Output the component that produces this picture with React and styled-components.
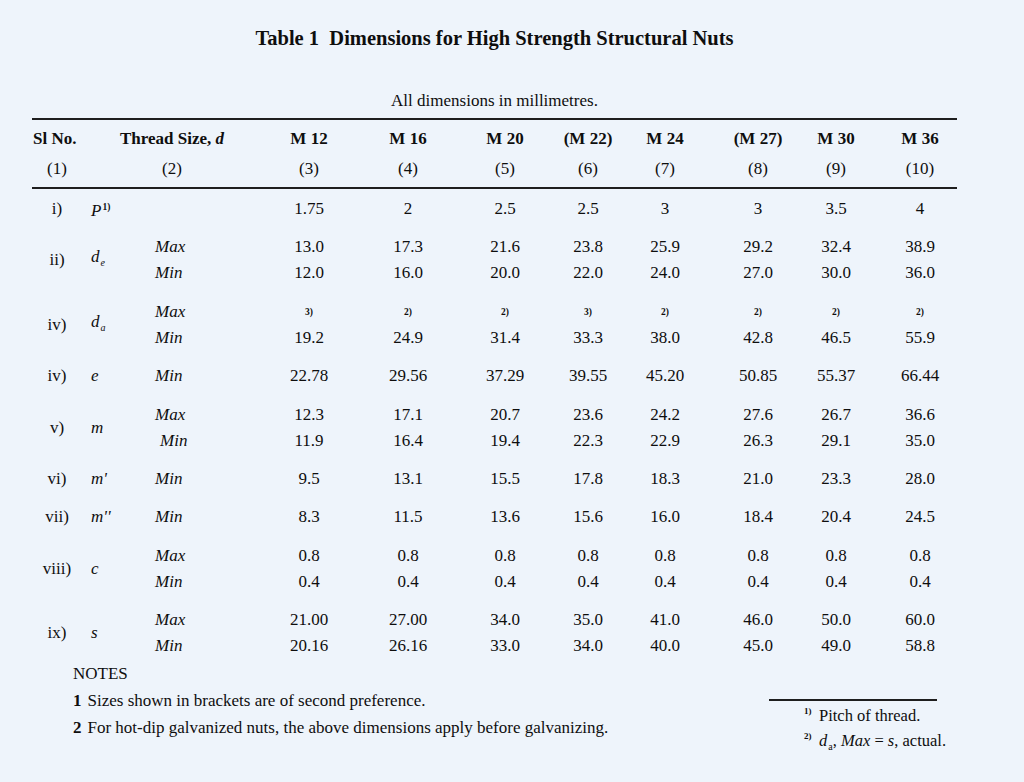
import React from "react";
import styled, { createGlobalStyle } from "styled-components";

const GlobalStyle = createGlobalStyle`
  html, body { margin: 0; padding: 0; background: #eef4fb; }
  body {
    font-family: "Liberation Serif", "Times New Roman", serif;
    color: #0e0e0e;
  }
`;

const COLS = "50px 63px 117px 94px 104px 90px 76px 78px 108px 48px 120px";

const Page = styled.div`
  width: 1024px;
  height: 782px;
  box-sizing: border-box;
  padding: 26px 0 0 32px;
  background: #eef4fb;
  overflow: hidden;
`;

const Title = styled.h1`
  margin: 0;
  width: 925px;
  text-align: center;
  font-size: 20.5px;
  line-height: 24px;
  font-weight: 700;
  white-space: pre;
`;

const Subtitle = styled.p`
  margin: 41px 0 0;
  width: 925px;
  text-align: center;
  font-size: 17px;
  line-height: 20px;
`;

const Rule = styled.div`
  width: ${(p) => p.$width || 925}px;
  height: ${(p) => p.$thick}px;
  background: #1e1e1e;
`;

const Table = styled.div`
  margin-top: 7px;
`;

const Grid = styled.div`
  display: grid;
  grid-template-columns: ${COLS};
  grid-auto-rows: 26px;
  width: 948px;
  font-size: 17px;
  line-height: 26px;
`;

const HeadGrid = styled(Grid)`
  row-gap: 4px;
  padding: 6px 0 5px;
`;

const HeadCell = styled.div`
  font-weight: ${(p) => (p.$bold ? 700 : 400)};
  text-align: ${(p) => p.$align || "center"};
  grid-column: ${(p) => p.$span || "auto"};
  padding-left: ${(p) => p.$pl || 0}px;
  white-space: nowrap;
`;

const Body = styled.div`
  padding-top: 1.5px;
`;

const Group = styled(Grid)`
  padding: 6px 0 6.4px;
`;

const RowLabel = styled.div`
  grid-column: 1;
  grid-row: 1 / span ${(p) => p.$rows};
  align-self: center;
  text-align: center;
`;

const Symbol = styled.div`
  grid-column: 2;
  grid-row: 1 / span ${(p) => p.$rows};
  align-self: center;
  padding-left: 9px;
  font-style: italic;
  white-space: nowrap;
`;

const Limit = styled.div`
  padding-left: ${(p) => 10 + (p.$indent || 0)}px;
  font-style: italic;
`;

const Value = styled.div`
  text-align: center;
  white-space: nowrap;
`;

const Sup = styled.span`
  font-size: 9.5px;
  font-style: normal;
  font-weight: 700;
  vertical-align: ${(p) => p.$raise || 6}px;
  margin-left: ${(p) => p.$ml || 0}px;
`;

const Sub = styled.span`
  font-size: 10px;
  vertical-align: -4px;
  margin-left: 1px;
`;

const Bottom = styled.div`
  display: flex;
  align-items: flex-start;
  justify-content: space-between;
  width: 905px;
  margin-top: -6px;
`;

const Notes = styled.div`
  padding-left: 41px;
  font-size: 17px;
  line-height: 27px;
`;

const NoteLine = styled.div`
  white-space: nowrap;
`;

const NoteNum = styled.b`
  margin-right: 6px;
`;

const Footnotes = styled.div`
  margin-top: 39.5px;
  width: 168px;
`;

const FootList = styled.div`
  padding: 2px 0 0 50px;
  font-size: 16.5px;
  line-height: 25px;
`;

const FootLine = styled.div`
  position: relative;
  white-space: nowrap;
`;

const FootMark = styled.span`
  position: absolute;
  left: -15px;
  top: -4px;
  font-size: 9px;
  font-weight: 700;
`;

const I = styled.i``;

const HEAD = ["M 12", "M 16", "M 20", "(M 22)", "M 24", "(M 27)", "M 30", "M 36"];

const ROWS = [
  { n: "i)", sym: <>P<Sup $ml={1}>1)</Sup></>, lines: [{ lim: "", v: ["1.75", "2", "2.5", "2.5", "3", "3", "3.5", "4"] }] },
  {
    n: "ii)",
    sym: <>d<Sub>e</Sub></>,
    lines: [
      { lim: "Max", v: ["13.0", "17.3", "21.6", "23.8", "25.9", "29.2", "32.4", "38.9"] },
      { lim: "Min", v: ["12.0", "16.0", "20.0", "22.0", "24.0", "27.0", "30.0", "36.0"] },
    ],
  },
  {
    n: "iv)",
    sym: <>d<Sub>a</Sub></>,
    lines: [
      { lim: "Max", sup: true, v: ["3)", "2)", "2)", "3)", "2)", "2)", "2)", "2)"] },
      { lim: "Min", v: ["19.2", "24.9", "31.4", "33.3", "38.0", "42.8", "46.5", "55.9"] },
    ],
  },
  { n: "iv)", sym: "e", lines: [{ lim: "Min", v: ["22.78", "29.56", "37.29", "39.55", "45.20", "50.85", "55.37", "66.44"] }] },
  {
    n: "v)",
    sym: "m",
    lines: [
      { lim: "Max", v: ["12.3", "17.1", "20.7", "23.6", "24.2", "27.6", "26.7", "36.6"] },
      { lim: "Min", indent: 5, v: ["11.9", "16.4", "19.4", "22.3", "22.9", "26.3", "29.1", "35.0"] },
    ],
  },
  { n: "vi)", sym: "m'", lines: [{ lim: "Min", v: ["9.5", "13.1", "15.5", "17.8", "18.3", "21.0", "23.3", "28.0"] }] },
  { n: "vii)", sym: "m''", lines: [{ lim: "Min", v: ["8.3", "11.5", "13.6", "15.6", "16.0", "18.4", "20.4", "24.5"] }] },
  {
    n: "viii)",
    sym: "c",
    lines: [
      { lim: "Max", v: ["0.8", "0.8", "0.8", "0.8", "0.8", "0.8", "0.8", "0.8"] },
      { lim: "Min", v: ["0.4", "0.4", "0.4", "0.4", "0.4", "0.4", "0.4", "0.4"] },
    ],
  },
  {
    n: "ix)",
    sym: "s",
    lines: [
      { lim: "Max", v: ["21.00", "27.00", "34.0", "35.0", "41.0", "46.0", "50.0", "60.0"] },
      { lim: "Min", v: ["20.16", "26.16", "33.0", "34.0", "40.0", "45.0", "49.0", "58.8"] },
    ],
  },
];

export default function App() {
  return (
    <Page>
      <GlobalStyle />
      <Title>Table 1  Dimensions for High Strength Structural Nuts</Title>
      <Subtitle>All dimensions in millimetres.</Subtitle>
      <Table>
        <Rule $thick={2} />
        <HeadGrid>
          <HeadCell $bold $align="left" $pl={1}>Sl No.</HeadCell>
          <HeadCell $bold $span="2 / span 2">
            Thread Size, <I>d</I>
          </HeadCell>
          {HEAD.map((h) => (
            <HeadCell key={h} $bold>{h}</HeadCell>
          ))}
          <HeadCell>(1)</HeadCell>
          <HeadCell $span="2 / span 2">(2)</HeadCell>
          {HEAD.map((h, i) => (
            <HeadCell key={"n" + h}>({i + 3})</HeadCell>
          ))}
        </HeadGrid>
        <Rule $thick={1.5} />
        <Body>
          {ROWS.map((r, ri) => (
            <Group key={ri}>
              <RowLabel $rows={r.lines.length}>{r.n}</RowLabel>
              <Symbol $rows={r.lines.length}>{r.sym}</Symbol>
              {r.lines.map((l, li) => (
                <React.Fragment key={li}>
                  <Limit $indent={l.indent}>{l.lim}</Limit>
                  {l.v.map((v, vi) => (
                    <Value key={vi}>{l.sup ? <Sup $raise={8}>{v}</Sup> : v}</Value>
                  ))}
                </React.Fragment>
              ))}
            </Group>
          ))}
        </Body>
      </Table>
      <Bottom>
        <Notes>
          <NoteLine>NOTES</NoteLine>
          <NoteLine>
            <NoteNum>1</NoteNum>Sizes shown in brackets are of second preference.
          </NoteLine>
          <NoteLine>
            <NoteNum>2</NoteNum>For hot-dip galvanized nuts, the above dimensions apply before galvanizing.
          </NoteLine>
        </Notes>
        <Footnotes>
          <Rule $thick={1.5} $width={168} />
          <FootList>
            <FootLine>
              <FootMark>1)</FootMark>Pitch of thread.
            </FootLine>
            <FootLine>
              <FootMark>2)</FootMark>
              <I>d</I>
              <Sub>a</Sub>, <I>Max</I> = <I>s</I>, actual.
            </FootLine>
          </FootList>
        </Footnotes>
      </Bottom>
    </Page>
  );
}
